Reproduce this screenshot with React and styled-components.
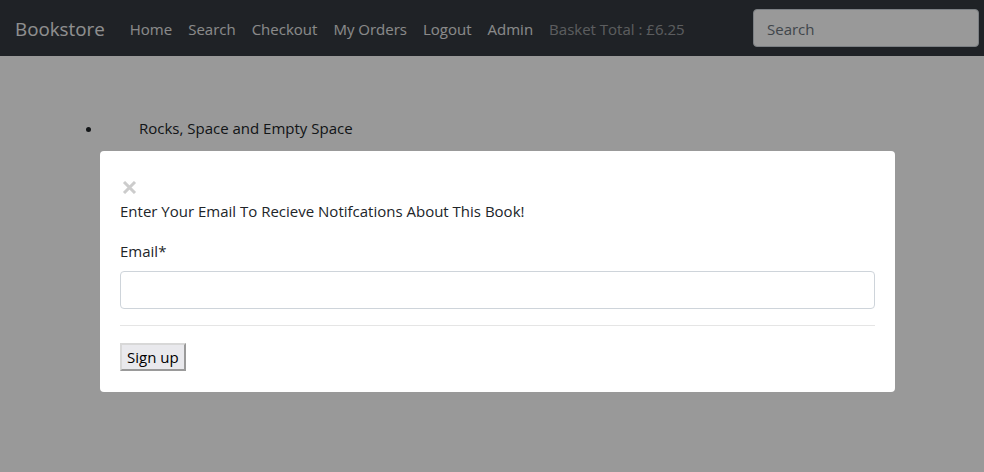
import React from "react";
import styled, { createGlobalStyle } from "styled-components";

const GlobalStyle = createGlobalStyle`
  body {
    margin: 0;
    font-family: "Open Sans", "Noto Sans", sans-serif;
    background: #ffffff;
    color: #212529;
  }
`;

const links = ["Home", "Search", "Checkout", "My Orders", "Logout", "Admin"];

const App = () => {
  return (
    <div>
      <GlobalStyle />
      <NavBar>
        <Brand>Bookstore</Brand>
        <NavList>
          {links.map((l) => (
            <NavLink key={l}>{l}</NavLink>
          ))}
          <NavLink muted>Basket Total : £6.25</NavLink>
        </NavList>
        <SearchBox placeholder="Search" />
      </NavBar>
      <Content>
        <BookList>
          <BookItem>Rocks, Space and Empty Space</BookItem>
        </BookList>
      </Content>
      <Overlay>
        <Modal>
          <Close aria-label="Close">
            <svg width="15" height="13" viewBox="0 0 15 13">
              <path d="M2 1 L13 12 M13 1 L2 12" stroke="#cccccc" strokeWidth="3" />
            </svg>
          </Close>
          <Title>Enter Your Email To Recieve Notifcations About This Book!</Title>
          <Label>Email*</Label>
          <Input type="email" />
          <Divider />
          <SignUp>Sign up</SignUp>
        </Modal>
      </Overlay>
    </div>
  );
};

const NavBar = styled.nav`
  display: flex;
  align-items: center;
  height: 56px;
  padding: 0 5px 0 15px;
  background: #343a40;
  box-sizing: border-box;
`;

const Brand = styled.div`
  font-size: 18.8px;
  color: #ffffff;
  opacity: 0.92;
  margin-right: 25px;
  padding-top: 2px;
`;

const NavList = styled.div`
  display: flex;
  align-items: center;
  gap: 16px;
  flex: 1;
  padding-top: 2px;
`;

const NavLink = styled.span`
  font-size: 15px;
  color: ${(p) => (p.muted ? "rgba(255,255,255,0.5)" : "#ffffff")};
  opacity: ${(p) => (p.muted ? 1 : 0.88)};
`;

const SearchBox = styled.input`
  width: 226px;
  height: 38px;
  box-sizing: border-box;
  border: 1px solid #ced4da;
  border-radius: 4px;
  padding: 6px 13px 4px;
  font-family: inherit;
  font-size: 15px;
  background: #ffffff;
  &::placeholder {
    color: #6c757d;
  }
`;

const Content = styled.main`
  padding: 60px 0 0 0;
`;

const BookList = styled.ul`
  margin: 0;
  padding-left: 103px;
`;

const BookItem = styled.li`
  font-size: 15px;
  line-height: 24px;
  padding-left: 36px;
`;

const Overlay = styled.div`
  position: fixed;
  inset: 0;
  background: rgba(0, 0, 0, 0.4);
  padding: 151px 0 0 100px;
`;

const Modal = styled.div`
  width: 795px;
  box-sizing: border-box;
  background: #ffffff;
  border-radius: 4px;
  padding: 30px 20px 21px 20px;
`;

const Close = styled.div`
  display: flex;
  height: 13px;
  margin: 0 0 5px 2px;
  svg {
    display: block;
  }
`;

const Title = styled.p`
  margin: 0 0 16px 0;
  font-size: 15px;
  line-height: 24px;
`;

const Label = styled.label`
  display: block;
  font-size: 15px;
  line-height: 24px;
  margin-bottom: 8px;
`;

const Input = styled.input`
  display: block;
  width: 100%;
  height: 38px;
  box-sizing: border-box;
  border: 1px solid #ced4da;
  border-radius: 4px;
  font-size: 16px;
`;

const Divider = styled.hr`
  margin: 16px 0 17px 0;
  border: 0;
  border-top: 1px solid #e5e5e5;
`;

const SignUp = styled.button`
  font-family: inherit;
  font-size: 15px;
  line-height: 22px;
  padding: 1px 5px;
  background: #e9e9ed;
  border: 2px solid #d8d8d8;
  border-right-color: #9a9a9a;
  border-bottom-color: #9a9a9a;
  color: #000;
`;

export default App;
